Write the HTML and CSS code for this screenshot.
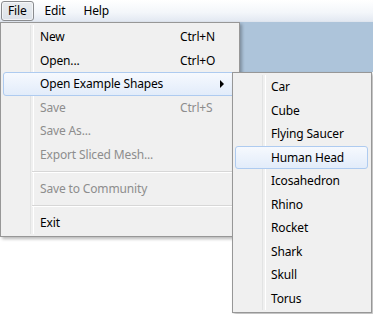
FILE: index.html
```html
<!DOCTYPE html>
<html lang="en">
<head>
  <meta charset="UTF-8" />
  <title>File menu</title>
  <link rel="stylesheet" href="styles.css">
</head>
<body>
  <!-- Menu bar -->
  <nav class="menubar">
    <span class="menubar-item active">File</span>
    <span class="menubar-item">Edit</span>
    <span class="menubar-item">Help</span>
  </nav>
  <div class="toolband"></div>

  <!-- File dropdown -->
  <div class="menu file-menu">
    <div class="menu-item"><span>New</span><span class="key">Ctrl+N</span></div>
    <div class="menu-item"><span>Open...</span><span class="key">Ctrl+O</span></div>
    <div class="menu-item hover"><span>Open Example Shapes</span><span class="arrow"></span></div>
    <div class="menu-item disabled"><span>Save</span><span class="key">Ctrl+S</span></div>
    <div class="menu-item disabled"><span>Save As...</span></div>
    <div class="menu-item disabled"><span>Export Sliced Mesh...</span></div>
    <div class="menu-sep"></div>
    <div class="menu-item disabled"><span>Save to Community</span></div>
    <div class="menu-sep"></div>
    <div class="menu-item"><span>Exit</span></div>
  </div>

  <!-- Example shapes submenu -->
  <div class="menu sub-menu">
    <div class="menu-item"><span>Car</span></div>
    <div class="menu-item"><span>Cube</span></div>
    <div class="menu-item"><span>Flying Saucer</span></div>
    <div class="menu-item hover"><span>Human Head</span></div>
    <div class="menu-item"><span>Icosahedron</span></div>
    <div class="menu-item"><span>Rhino</span></div>
    <div class="menu-item"><span>Rocket</span></div>
    <div class="menu-item"><span>Shark</span></div>
    <div class="menu-item"><span>Skull</span></div>
    <div class="menu-item"><span>Torus</span></div>
  </div>
</body>
</html>
```

FILE: styles.css
```css
* {
  margin: 0;
  padding: 0;
  box-sizing: border-box;
}
body {
  background: #ffffff;
  font-family: "Noto Sans", "Open Sans", sans-serif;
  font-size: 12px;
  letter-spacing: -0.15px;
  color: #000;
  position: relative;
  width: 373px;
  height: 314px;
  overflow: hidden;
}
.menubar {
  height: 22px;
  display: flex;
  align-items: center;
  padding-left: 1px;
  background: linear-gradient(#ffffff, #f3f6fa 60%, #e3e9f2);
  border-bottom: 1px solid #dfe5ee;
}
.menubar-item {
  height: 20px;
  line-height: 18px;
  padding: 0 6px;
  margin-right: 4px;
  border: 1px solid transparent;
  border-radius: 3px;
}
.menubar-item.active {
  border-color: #8a8c8f;
  background: linear-gradient(#e9ecef, #dce2e9);
  box-shadow: inset 0 0 0 1px rgba(255, 255, 255, 0.6);
}
.toolband {
  height: 50px;
  background: #adc4da;
}

/* dropdown menus */
.menu {
  position: absolute;
  background: #f0f0f0;
  border: 1px solid #979797;
  padding: 2px;
  box-shadow: 2px 2px 3px rgba(0, 0, 0, 0.28);
}
.menu::before {
  /* icon gutter divider */
  content: "";
  position: absolute;
  top: 2px;
  bottom: 2px;
  left: 29px;
  width: 2px;
  border-left: 1px solid #e2e3e3;
  border-right: 1px solid #ffffff;
}
.file-menu {
  left: 0;
  top: 22px;
  width: 240px;
}
.sub-menu {
  left: 232px;
  top: 72px;
  width: 140px;
}
.menu-item {
  position: relative;
  height: 23.5px;
  display: flex;
  align-items: center;
  justify-content: space-between;
  padding: 0 18px 0 36px;
  border: 1px solid transparent;
  border-radius: 3px;
}
.sub-menu .menu-item {
  padding-left: 35px;
  margin-right: 1px;
}
.menu-item.hover {
  border-color: #aecbf0;
  background: linear-gradient(#f6f9fe, #e2ecfa);
}
.menu-item.disabled {
  color: #8d8d8d;
}
.key {
  min-width: 38px;
}
.arrow {
  width: 0;
  height: 0;
  margin-right: -6px;
  border-top: 4px solid transparent;
  border-bottom: 4px solid transparent;
  border-left: 4px solid #000;
}
.menu-sep {
  position: relative;
  height: 10.5px;
  margin-left: 29px;
}
.menu-sep::after {
  content: "";
  position: absolute;
  left: 0;
  right: 0;
  top: 5px;
  border-top: 1px solid #d7d7d7;
  border-bottom: 1px solid #ffffff;
}
```
